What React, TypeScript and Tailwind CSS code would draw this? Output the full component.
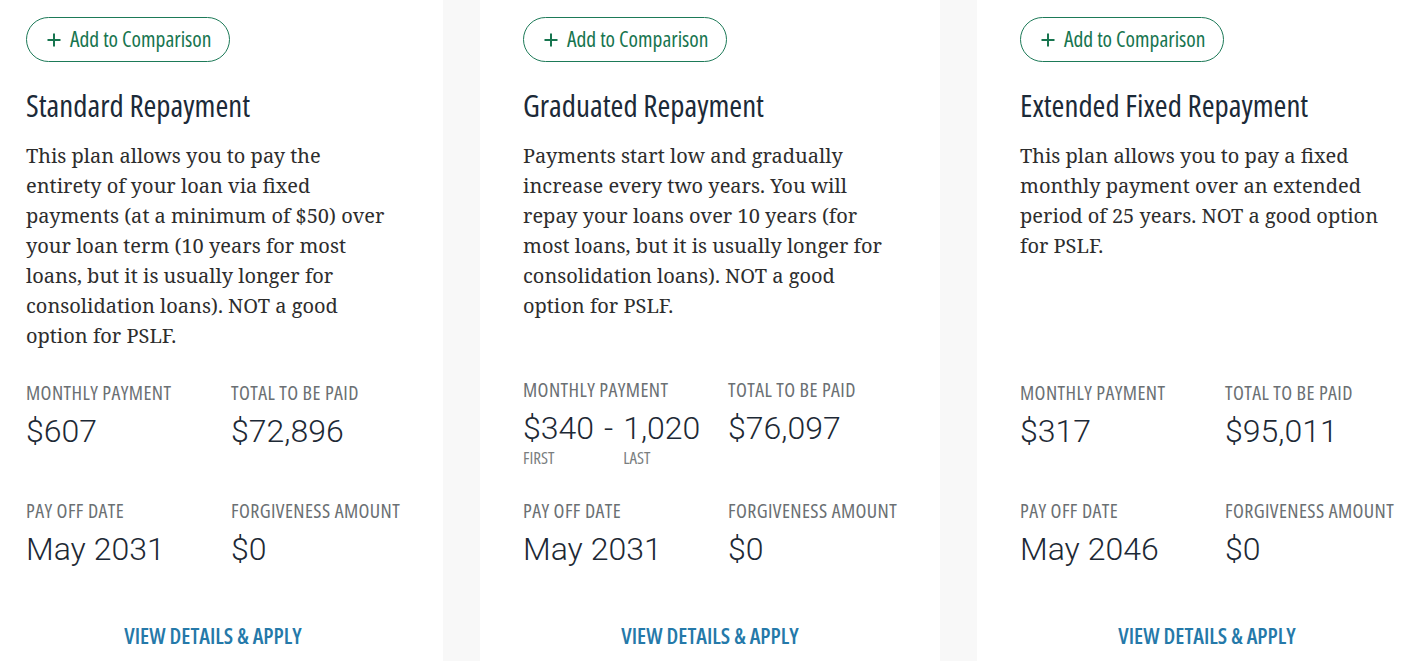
import React from "react";

const fam = "font-['Open_Sans',sans-serif] [font-stretch:75%]";

function Plus() {
  return (
    <svg width="14" height="14" viewBox="0 0 14 14" className="shrink-0">
      <path d="M7 0.5V13.5M0.5 7H13.5" stroke="#17754f" strokeWidth="2" fill="none" />
    </svg>
  );
}

type Stat = { label: string; value: React.ReactNode };

function StatBlock({ label, value }: Stat) {
  return (
    <div className="flex flex-col">
      <div className={`text-[20px] leading-[22px] tracking-[0.4px] text-[#6b7073] whitespace-nowrap ${fam}`}>{label}</div>
      <div className="mt-[8px] text-[32px] leading-[38px] font-light text-[#1d2935] font-['Roboto',sans-serif]">{value}</div>
    </div>
  );
}

function Card({
  title,
  body,
  monthly,
  total,
  payoff,
  shift = false,
}: {
  title: string;
  body: string;
  monthly: React.ReactNode;
  total: string;
  payoff: string;
  shift?: boolean;
}) {
  return (
    <div className="w-[460px] shrink-0 bg-white h-[661px] px-[43px] pt-[17px] flex flex-col">
      <div className="h-[365px] flex flex-col items-start">
        <button className={`h-[45px] w-[204px] rounded-full border border-[#1d7a58] flex items-center pl-[20px] gap-[9px] text-[#17754f] text-[21.5px] font-medium whitespace-nowrap ${fam}`}>
          <Plus />
          <span>Add to Comparison</span>
        </button>
        <h2 className={`mt-[26px] text-[31px] leading-[34px] font-medium text-[#1c2a38] whitespace-nowrap ${fam}`}>
          {title}
        </h2>
        <p className="mt-[19px] text-[20px] leading-[30px] text-[#2d2d2d] font-['Noto_Serif','DejaVu_Serif',serif]">{body}</p>
      </div>
      <div className={`grid grid-cols-[205px_1fr] ${shift ? "-mt-[3px] h-[121px]" : "h-[118px]"}`}>
        <StatBlock label="MONTHLY PAYMENT" value={monthly} />
        <StatBlock label="TOTAL TO BE PAID" value={total} />
      </div>
      <div className="grid grid-cols-[205px_1fr]">
        <StatBlock label="PAY OFF DATE" value={payoff} />
        <StatBlock label="FORGIVENESS AMOUNT" value="$0" />
      </div>
      <div className="mt-[56px] flex justify-center">
        <a className={`text-[22px] leading-[22px] text-[#2579a9] font-semibold whitespace-nowrap ${fam}`}>
          VIEW DETAILS &amp; APPLY
        </a>
      </div>
    </div>
  );
}

function Sub({ children }: { children: React.ReactNode }) {
  return (
    <span className={`mt-[2px] text-[17px] leading-[18px] font-normal text-[#7a7e80] ${fam}`}>
      {children}
    </span>
  );
}

export default function App() {
  return (
    <div className="w-[1420px] h-[661px] overflow-hidden bg-[#f8f8f8]">
      <div className="flex gap-[37px] -ml-[17px]">
        <Card
          title="Standard Repayment"
          body="This plan allows you to pay the entirety of your loan via fixed payments (at a minimum of $50) over your loan term (10 years for most loans, but it is usually longer for consolidation loans). NOT a good option for PSLF."
          monthly="$607"
          total="$72,896"
          payoff="May 2031"
        />
        <Card
          title="Graduated Repayment"
          body="Payments start low and gradually increase every two years. You will repay your loans over 10 years (for most loans, but it is usually longer for consolidation loans). NOT a good option for PSLF."
          shift
          monthly={
            <div className="flex items-start">
              <div className="flex flex-col">
                <span>$340</span>
                <Sub>FIRST</Sub>
              </div>
              <span className="px-[10px]">-</span>
              <div className="flex flex-col">
                <span>1,020</span>
                <Sub>LAST</Sub>
              </div>
            </div>
          }
          total="$76,097"
          payoff="May 2031"
        />
        <Card
          title="Extended Fixed Repayment"
          body="This plan allows you to pay a fixed monthly payment over an extended period of 25 years. NOT a good option for PSLF."
          monthly="$317"
          total="$95,011"
          payoff="May 2046"
        />
      </div>
    </div>
  );
}
